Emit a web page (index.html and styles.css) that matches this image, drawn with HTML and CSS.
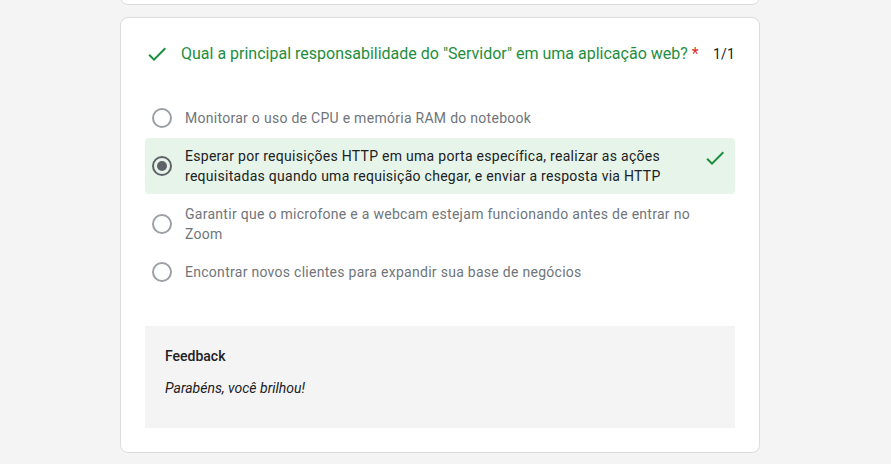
FILE: index.html
```html
<!DOCTYPE html>
<html lang="pt-BR">
<head>
<meta charset="utf-8">
<title>Quiz</title>
<link rel="stylesheet" href="styles.css">
</head>
<body>
<div class="page">
  <div class="card card-prev"></div>
  <div class="card question">
    <div class="q-header">
      <svg class="q-check" viewBox="0 0 24 24" width="24" height="24"><path d="M9 16.17L4.83 12l-1.42 1.41L9 19 21 7l-1.41-1.41z" fill="#1e8e3e"/></svg>
      <div class="q-title">Qual a principal responsabilidade do "Servidor" em uma aplicação web? <span class="req">*</span></div>
      <div class="q-score">1/1</div>
    </div>
    <div class="options">
      <div class="option">
        <span class="radio"></span>
        <span class="opt-text">Monitorar o uso de CPU e memória RAM do notebook</span>
        <span class="opt-icon"></span>
      </div>
      <div class="option correct">
        <span class="radio checked"></span>
        <span class="opt-text">Esperar por requisições HTTP em uma porta específica, realizar as ações requisitadas quando uma requisição chegar, e enviar a resposta via HTTP</span>
        <span class="opt-icon"><svg viewBox="0 0 24 24" width="24" height="24"><path d="M9 16.17L4.83 12l-1.42 1.41L9 19 21 7l-1.41-1.41z" fill="#1e8e3e"/></svg></span>
      </div>
      <div class="option">
        <span class="radio"></span>
        <span class="opt-text">Garantir que o microfone e a webcam estejam funcionando antes de entrar no Zoom</span>
        <span class="opt-icon"></span>
      </div>
      <div class="option">
        <span class="radio"></span>
        <span class="opt-text">Encontrar novos clientes para expandir sua base de negócios</span>
        <span class="opt-icon"></span>
      </div>
    </div>
    <div class="feedback">
      <div class="fb-title">Feedback</div>
      <div class="fb-text">Parabéns, você brilhou!</div>
    </div>
  </div>
</div>
</body>
</html>
```
FILE: styles.css
```css
* { box-sizing: border-box; }
html, body { margin: 0; padding: 0; }
body {
  background: #f4f4f4;
  font-family: Roboto, "Liberation Sans", Arial, sans-serif;
  overflow: hidden;
}
.page {
  width: 640px;
  margin-left: 120px;
}
.card {
  background: #fff;
  border: 1px solid #dadce0;
  border-radius: 8px;
}
.card-prev {
  height: 40px;
  margin-top: -35px;
  margin-bottom: 12px;
}
.question {
  padding: 24px;
}
.q-header {
  display: flex;
  align-items: flex-start;
  height: 24px;
}
.q-check {
  flex: none;
  display: block;
  margin-right: 12px;
}
.q-title {
  flex: 1;
  font-size: 16px;
  line-height: 24px;
  color: #1e8e3e;
}
.req { color: #d93025; }
.q-score {
  font-size: 14px;
  line-height: 24px;
  color: #202124;
  letter-spacing: .2px;
}
.options {
  margin-top: 34px;
  display: flex;
  flex-direction: column;
  gap: 2px;
}
.option {
  display: flex;
  align-items: center;
  padding: 8px 8px 8px 7px;
  border-radius: 4px;
  font-size: 14px;
  line-height: 20px;
  letter-spacing: .28px;
  color: #70757a;
}
.option.correct {
  background: #e6f4ea;
  color: #202124;
}
.radio {
  flex: none;
  width: 20px;
  height: 20px;
  border: 2px solid #9aa0a6;
  border-radius: 50%;
  margin-right: 13px;
  display: flex;
  align-items: center;
  justify-content: center;
}
.radio.checked {
  border-color: #5f6368;
}
.radio.checked::after {
  content: "";
  width: 10px;
  height: 10px;
  border-radius: 50%;
  background: #5f6368;
}
.opt-text {
  flex: 1;
}
.opt-icon {
  flex: none;
  width: 24px;
  height: 20px;
  margin-left: 4px;
  align-self: flex-start;
  overflow: visible;
}
.opt-icon svg { display: block; overflow: visible; }
.feedback {
  margin-top: 36px;
  background: #f4f4f4;
  padding: 20px 20px 30px;
  color: #202124;
  font-size: 14px;
  line-height: 20px;
}
.fb-title { font-weight: 500; }
.fb-text {
  margin-top: 12px;
  font-style: italic;
}
```
